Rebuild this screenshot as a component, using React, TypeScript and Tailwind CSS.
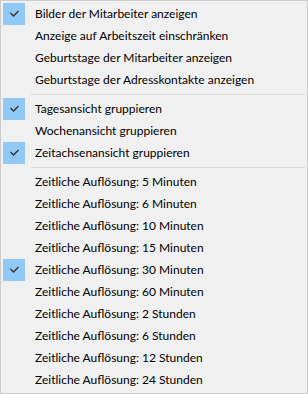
import React from "react";

type Item = { label: string; checked?: boolean } | "sep";

const items: Item[] = [
  { label: "Bilder der Mitarbeiter anzeigen", checked: true },
  { label: "Anzeige auf Arbeitszeit einschränken" },
  { label: "Geburtstage der Mitarbeiter anzeigen" },
  { label: "Geburtstage der Adresskontakte anzeigen" },
  "sep",
  { label: "Tagesansicht gruppieren", checked: true },
  { label: "Wochenansicht gruppieren" },
  { label: "Zeitachsenansicht gruppieren", checked: true },
  "sep",
  { label: "Zeitliche Auflösung: 5 Minuten" },
  { label: "Zeitliche Auflösung: 6 Minuten" },
  { label: "Zeitliche Auflösung: 10 Minuten" },
  { label: "Zeitliche Auflösung: 15 Minuten" },
  { label: "Zeitliche Auflösung: 30 Minuten", checked: true },
  { label: "Zeitliche Auflösung: 60 Minuten" },
  { label: "Zeitliche Auflösung: 2 Stunden" },
  { label: "Zeitliche Auflösung: 6 Stunden" },
  { label: "Zeitliche Auflösung: 12 Stunden" },
  { label: "Zeitliche Auflösung: 24 Stunden" },
];

function Check() {
  return (
    <svg width="22" height="22" viewBox="0 0 22 22">
      <polyline
        points="7.5,10 10.5,13 15.5,8"
        fill="none"
        stroke="#333333"
        strokeWidth="1.4"
      />
    </svg>
  );
}

export default function App() {
  return (
    <div
      className="w-[308px] h-[394px] border border-[#cccccc] bg-[#f0f0f0] p-[2px] text-[12px] text-black"
      style={{ fontFamily: 'Lato, "Noto Sans", sans-serif' }}
    >
      {items.map((it, i) =>
        it === "sep" ? (
          <div key={i} className="h-[7px] pt-[3px] pl-[28px]">
            <div className="h-px bg-[#d7d7d7]" />
          </div>
        ) : (
          <div key={i} className="flex h-[22px] items-center">
            <div
              className={
                "w-[22px] h-[22px] flex-none " + (it.checked ? "bg-[#90c8f6]" : "")
              }
            >
              {it.checked ? <Check /> : null}
            </div>
            <span className="ml-[10px] leading-[22px] whitespace-nowrap">{it.label}</span>
          </div>
        )
      )}
    </div>
  );
}
